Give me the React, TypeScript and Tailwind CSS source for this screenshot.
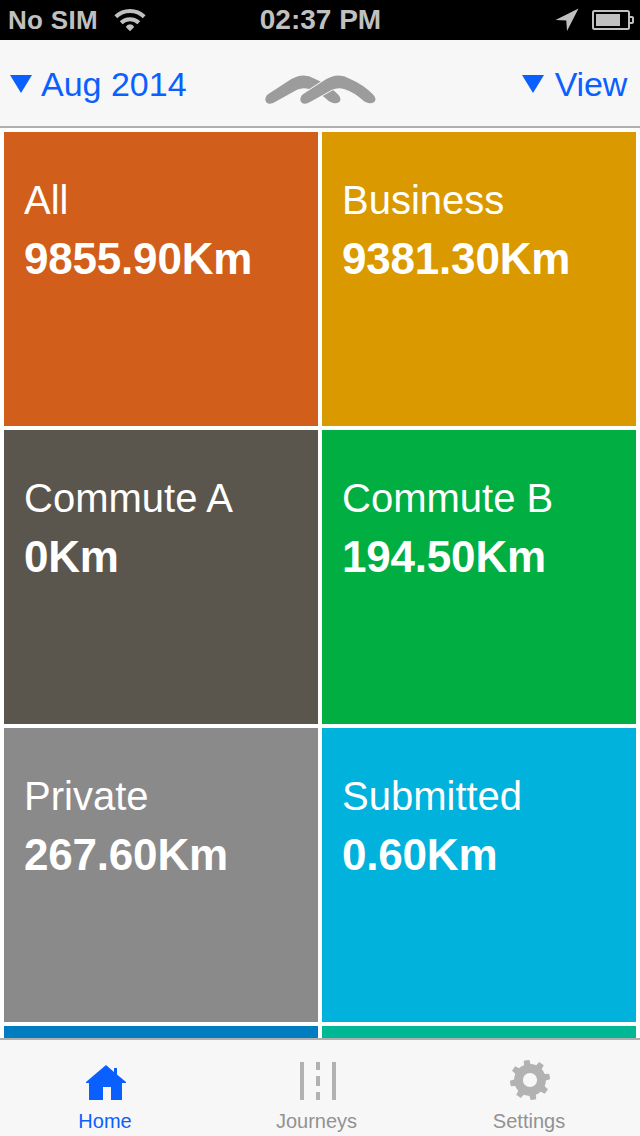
const tiles = [
  { title: 'All', value: '9855.90Km', color: 'bg-[#d15e1a]' },
  { title: 'Business', value: '9381.30Km', color: 'bg-[#db9900]' },
  { title: 'Commute A', value: '0Km', color: 'bg-[#5a564d]' },
  { title: 'Commute B', value: '194.50Km', color: 'bg-[#00ae41]' },
  { title: 'Private', value: '267.60Km', color: 'bg-[#8a8a8a]' },
  { title: 'Submitted', value: '0.60Km', color: 'bg-[#00b2dc]' },
  { title: '', value: '', color: 'bg-[#007cc0]' },
  { title: '', value: '', color: 'bg-[#00b893]' },
]

const boomerang =
  'M182 297 Q182 286 191 280 L259 236 Q295 214 330 234 Q372 252 401 282 Q409 291 407 299 Q404 309 389 308 Q381 307 373 302 Q345 275 313 265 Q295 259 277 267 L211 304 Q202 310 193 309 Q183 306 182 297 Z'

const teeth = [0, 45, 90, 135, 180, 225, 270, 315]

function StatusBar() {
  return (
    <div className="grid h-10 shrink-0 grid-cols-[1fr_auto_1fr] items-center bg-black text-[#c0c0c0]">
      <div className="flex items-center pl-2">
        <span className="text-[26px] leading-10 font-bold tracking-[0.3px]">No SIM</span>
        <svg className="ml-4 h-6 w-8" viewBox="0 0 32 24" fill="none" stroke="currentColor">
          <path d="M1.8 8.8 A20.5 20.5 0 0 1 30.2 8.8" strokeWidth="4" />
          <path d="M7.2 14.8 A12.6 12.6 0 0 1 24.8 14.8" strokeWidth="4" />
          <path d="M16 23.2 L11.8 18.9 Q13 16.2 16 16.2 Q19 16.2 20.2 18.9 Z" fill="currentColor" stroke="none" />
        </svg>
      </div>
      <span className="pl-px text-[28px] leading-[38px] font-bold">02:37 PM</span>
      <div className="flex items-center justify-end pr-1.5">
        <svg className="h-6 w-6" viewBox="0 0 24 24" fill="currentColor">
          <path d="M23.5 .5 L12 23 L11.3 12.5 L.5 12 Z" />
        </svg>
        <svg className="ml-[13px] h-5 w-[42px]" viewBox="0 0 42 20" fill="none" stroke="currentColor">
          <rect x="1" y="1" width="36" height="18" rx="1.5" strokeWidth="2" />
          <rect x="4" y="4" width="24" height="12" fill="currentColor" stroke="none" />
          <path d="M37 7 H40 Q41 7 41 8 V12 Q41 13 40 13 H37" strokeWidth="2" />
        </svg>
      </div>
    </div>
  )
}

function DownArrow() {
  return (
    <svg className="h-[18px] w-[22px]" viewBox="0 0 22 18" fill="currentColor">
      <path d="M0 0 H22 L11 18 Z" />
    </svg>
  )
}

function Header() {
  return (
    <header className="grid h-[88px] shrink-0 grid-cols-[1fr_auto_1fr] items-center border-b-2 border-[#afafaf] bg-[#f7f7f7] text-[34px] text-[#0a60ff]">
      <button className="flex items-center gap-[9px] pt-0.5 pl-2.5">
        <DownArrow />
        <span>Aug 2014</span>
      </button>
      <svg className="mt-[13px] ml-0.5 h-8 w-[112px]" viewBox="76 220 336 96" fill="#9c9c9c">
        <path d={boomerang} transform="translate(-105 0)" />
        <path d={boomerang} stroke="#f7f7f7" strokeWidth="6" />
        <path d={boomerang} />
      </svg>
      <button className="flex items-center justify-end gap-[11px] pt-0.5 pr-[13px]">
        <DownArrow />
        <span className="tracking-[-0.2px]">View</span>
      </button>
    </header>
  )
}

function HomeIcon() {
  return (
    <svg className="ml-0.5 h-10 w-10" viewBox="0 0 40 40" fill="currentColor">
      <path d="M20 5 L28 12 V8 H31 V14.5 L40 22 V23 H36 V40 H25 V27 H17 V40 H3 V23 H0 V22 Z" />
    </svg>
  )
}

function JourneysIcon() {
  return (
    <svg className="h-10 w-10" viewBox="0 0 40 40" fill="#b2b2b2">
      <path d="M3 2 H7 V40 H3 Z M35 2 H39 V40 H35 Z M19 2 H23 V10 H19 Z M19 16 H23 V26 H19 Z M19 32 H23 V40 H19 Z" />
    </svg>
  )
}

function SettingsIcon() {
  return (
    <svg className="ml-0.5 h-10 w-10" viewBox="0 0 40 40" fill="#b2b2b2">
      <g transform="rotate(-10 20 20)">
        {teeth.map((angle) => (
          <path key={angle} d="M17.2 0 H22.8 L23.6 7 H16.4 Z" transform={`rotate(${angle} 20 20)`} />
        ))}
      </g>
      <circle cx="20" cy="20" r="11.5" fill="none" stroke="#b2b2b2" strokeWidth="8.8" />
    </svg>
  )
}

const tabs = [
  { label: 'Home', icon: <HomeIcon />, style: 'w-[210px] text-[#0a60ff]' },
  { label: 'Journeys', icon: <JourneysIcon />, style: 'w-[213px] text-[#929292]' },
  { label: 'Settings', icon: <SettingsIcon />, style: 'w-[212px] text-[#929292]' },
]

export default function App() {
  return (
    <div className="flex h-[1136px] w-[640px] flex-col overflow-hidden bg-white font-['Liberation_Sans',Arial,sans-serif]">
      <StatusBar />
      <Header />

      <main className="min-h-0 flex-1 overflow-hidden p-1">
        <div className="grid auto-rows-[294px] grid-cols-2 gap-1">
          {tiles.map((tile, index) => (
            <div key={index} className={`${tile.color} px-5 pt-[43px] text-white`}>
              <div className="text-[40px] leading-[50px]">{tile.title}</div>
              <div className="mt-[7px] text-[44px] leading-[54px] font-bold tracking-[-0.2px]">{tile.value}</div>
            </div>
          ))}
        </div>
      </main>

      <nav className="flex h-[98px] shrink-0 border-t-2 border-[#afafaf] bg-[#f7f7f7]">
        {tabs.map((tab) => (
          <button key={tab.label} className={`${tab.style} flex flex-col items-center pt-5 text-xl`}>
            {tab.icon}
            <span className="mt-[7px] leading-7">{tab.label}</span>
          </button>
        ))}
      </nav>
    </div>
  )
}
